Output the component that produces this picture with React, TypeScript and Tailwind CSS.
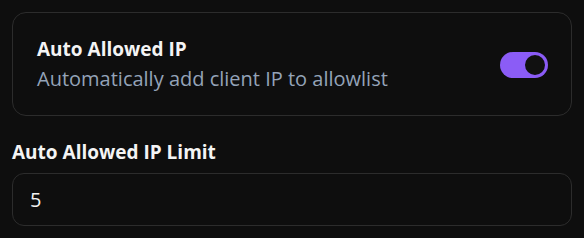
import { useState } from "react";

export default function App() {
  const [enabled, setEnabled] = useState(true);
  const [limit, setLimit] = useState("5");

  return (
    <div
      className="min-h-screen w-full bg-[#0e0e0e] p-3 text-[#f2f2f2]"
      style={{ fontFamily: '"Open Sans", "Noto Sans", sans-serif' }}
    >
      {/* Toggle card */}
      <div className="flex items-center justify-between rounded-[14px] border border-[#2c2c2c] pb-[22px] pl-6 pr-[23px] pt-6">
        <div>
          <div className="text-[19px] font-bold leading-6 text-[#f4f4f4]">Auto Allowed IP</div>
          <div className="mt-1 text-xl leading-7 text-[#94a3b8]">Automatically add client IP to allowlist</div>
        </div>
        <button
          onClick={() => setEnabled(!enabled)}
          className={`flex h-[26px] w-12 items-center rounded-full p-px ${enabled ? "justify-end bg-[#8b5cf6]" : "justify-start bg-[#3a3a3a]"}`}
        >
          <span className="h-6 w-6 rounded-full border-2 border-[#8b5cf6] bg-[#111111]" />
        </button>
      </div>

      {/* Limit */}
      <div className="mt-[22px]">
        <label className="block text-[19px] font-bold leading-7 text-[#f4f4f4]">Auto Allowed IP Limit</label>
        <input
          value={limit}
          onChange={(e) => setLimit(e.target.value)}
          className="mt-[7px] h-[53px] w-full rounded-xl border border-[#2c2c2c] bg-transparent px-[17px] text-xl text-[#f2f2f2] outline-none"
        />
      </div>
    </div>
  );
}
